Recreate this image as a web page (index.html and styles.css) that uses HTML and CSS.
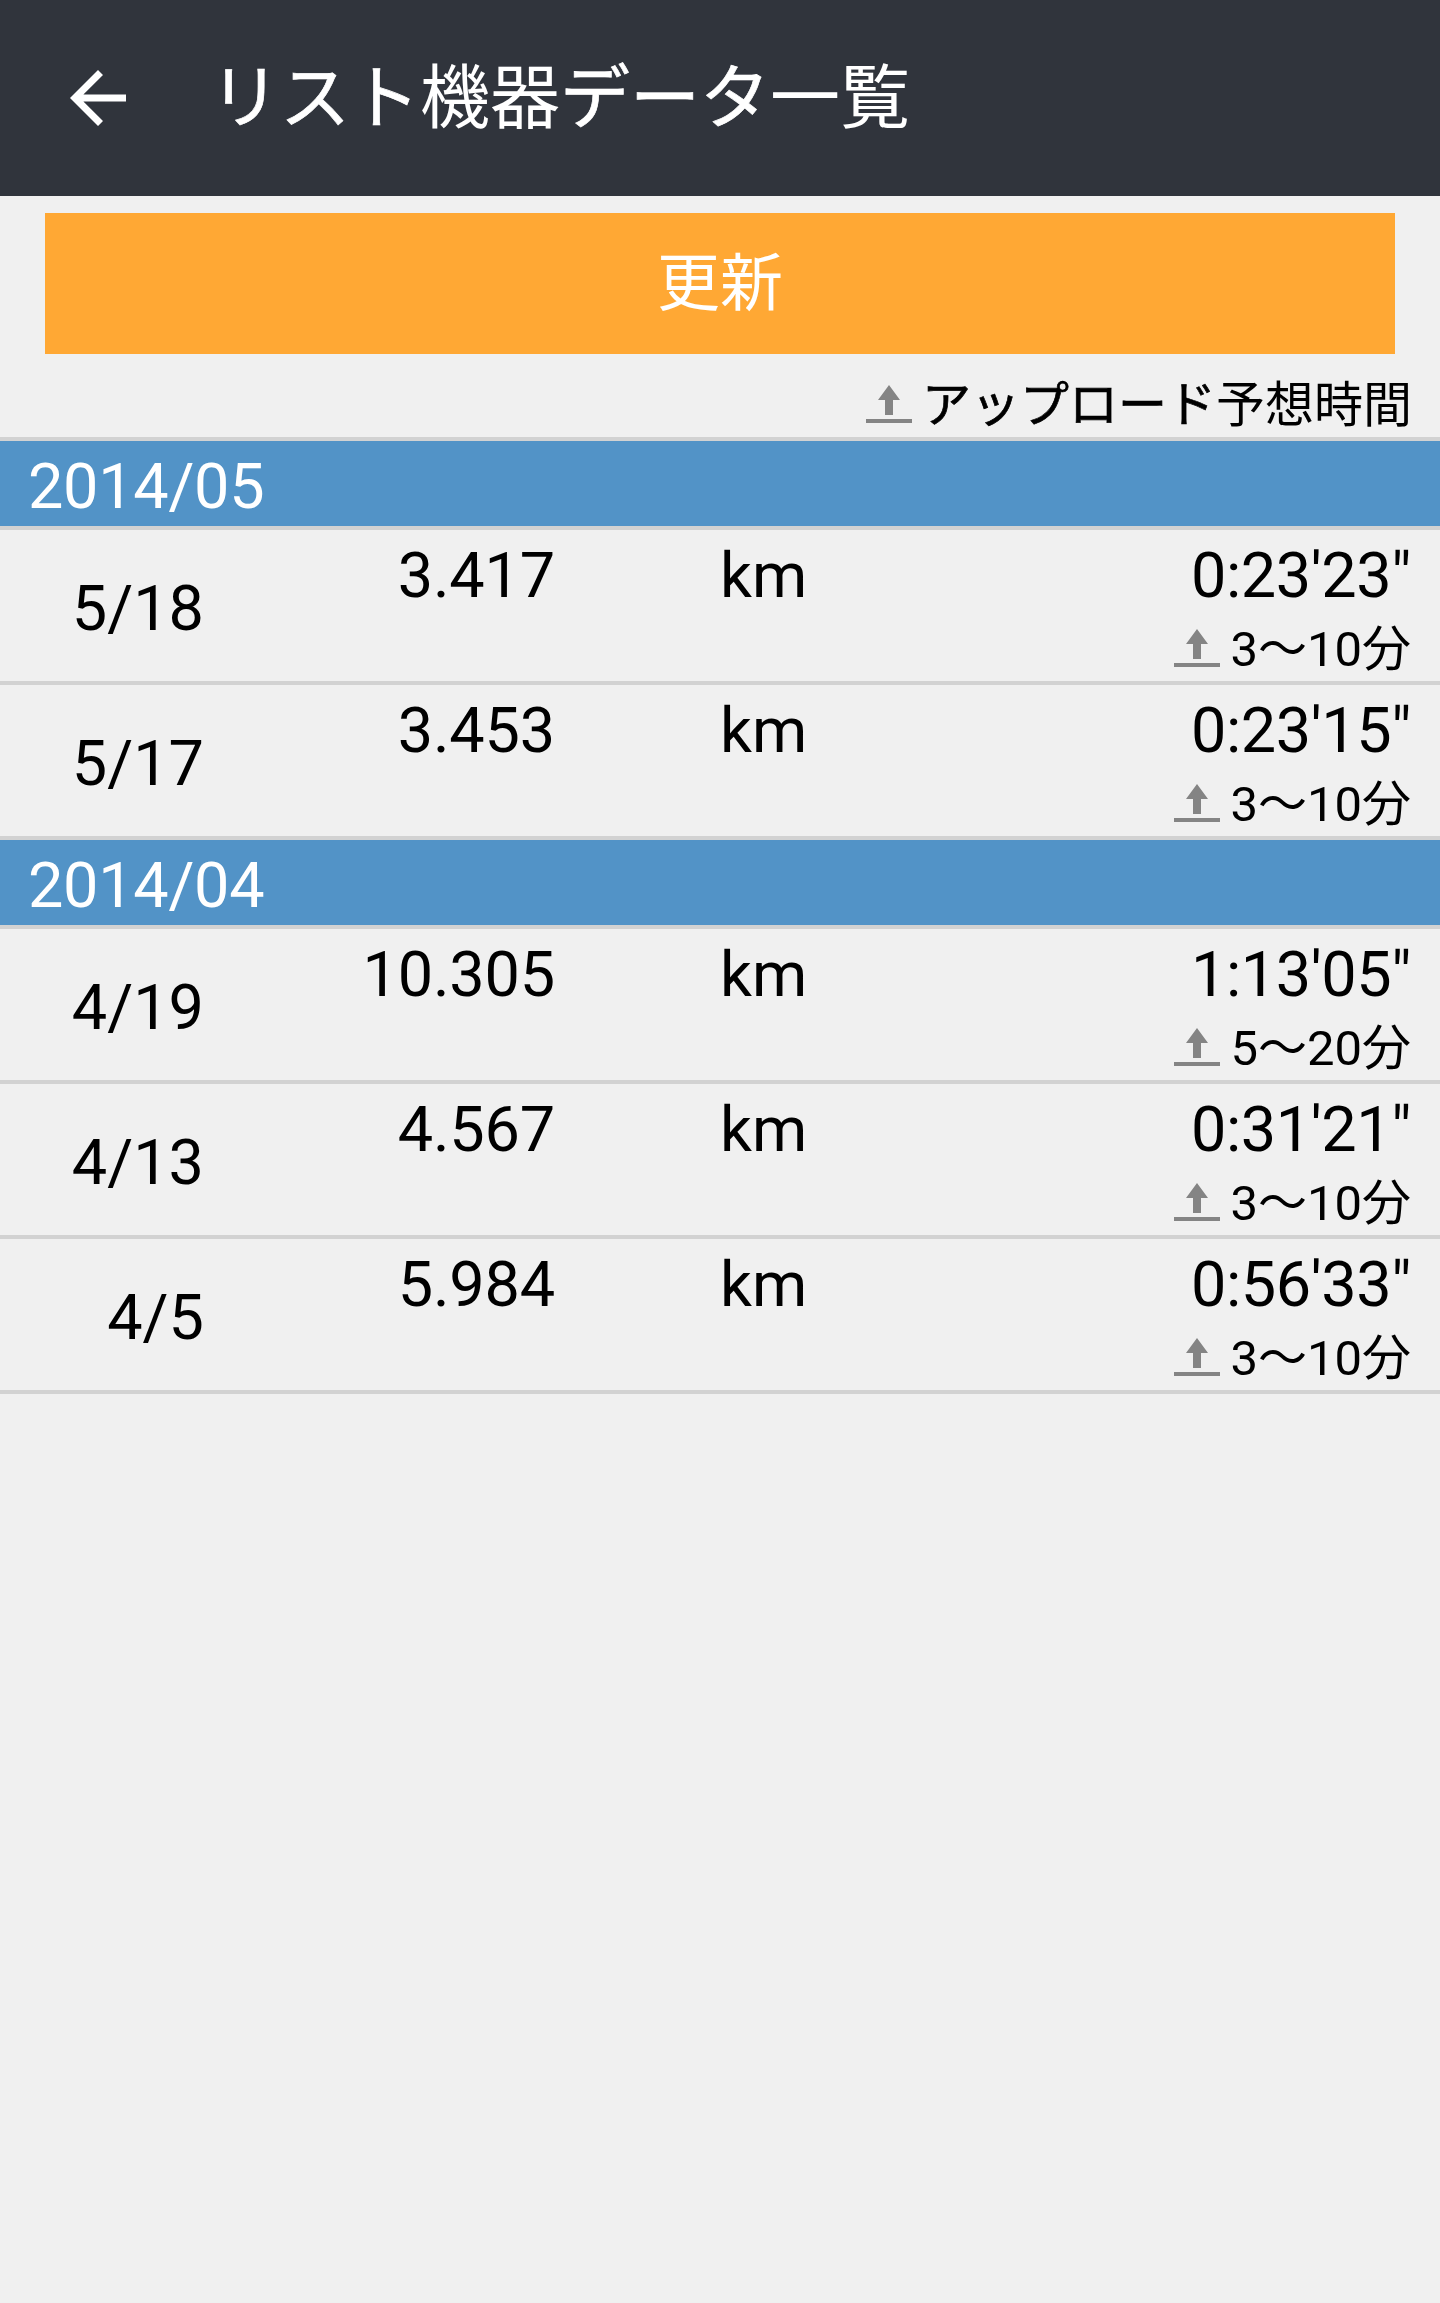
FILE: index.html
```html
<!doctype html>
<html lang="ja">
<head>
<meta charset="utf-8">
<title>リスト機器データ一覧</title>
<link rel="stylesheet" href="styles.css">
</head>
<body>
<svg class="defs">
  <symbol id="upload" viewBox="0 0 46 38">
    <path d="M23 0L34 15H27V30H19V15H12Z M0 34H46V38H0Z"/>
  </symbol>
</svg>
<div id="header">
  <svg class="back" viewBox="0 0 56 56">
    <path d="M56 24.5H13.4L33 5L28 0L0 28L28 56L33 51L13.4 31.5H56Z"/>
  </svg>
  <h1><span class="kana">リスト</span>機器<span class="kana">データ</span>一覧</h1>
</div>
<button id="update">更新</button>
<div class="legend upload">
  <svg><use href="#upload"/></svg>
  <span><span class="kana">アップロード</span>予想時間</span>
</div>
<div id="list">
  <h2>2014/05</h2>
  <div class="row">
    <div class="date">5/18</div>
    <div class="distance">3.417</div>
    <div class="unit">km</div>
    <div class="result">
      <div class="time">0:23'23"</div>
      <div class="upload"><svg><use href="#upload"/></svg><span>3～10分</span></div>
    </div>
  </div>
  <div class="row">
    <div class="date">5/17</div>
    <div class="distance">3.453</div>
    <div class="unit">km</div>
    <div class="result">
      <div class="time">0:23'15"</div>
      <div class="upload"><svg><use href="#upload"/></svg><span>3～10分</span></div>
    </div>
  </div>
  <h2>2014/04</h2>
  <div class="row">
    <div class="date">4/19</div>
    <div class="distance">10.305</div>
    <div class="unit">km</div>
    <div class="result">
      <div class="time">1:13'05"</div>
      <div class="upload"><svg><use href="#upload"/></svg><span>5～20分</span></div>
    </div>
  </div>
  <div class="row">
    <div class="date">4/13</div>
    <div class="distance">4.567</div>
    <div class="unit">km</div>
    <div class="result">
      <div class="time">0:31'21"</div>
      <div class="upload"><svg><use href="#upload"/></svg><span>3～10分</span></div>
    </div>
  </div>
  <div class="row">
    <div class="date">4/5</div>
    <div class="distance">5.984</div>
    <div class="unit">km</div>
    <div class="result">
      <div class="time">0:56'33"</div>
      <div class="upload"><svg><use href="#upload"/></svg><span>3～10分</span></div>
    </div>
  </div>
</div>
</body>
</html>
```
FILE: styles.css
```css
* {
    box-sizing: border-box;
}
body {
    margin: 0;
    min-height: 2303px;
    background: #f0f0f0;
    color: #000;
    font: 63px/74px Roboto, "Noto Sans CJK JP", sans-serif;
}
h1, h2 {
    margin: 0;
    font-weight: normal;
}
.defs {
    display: none;
}
/* katakana a bit heavier than the kanji */
.kana {
    -webkit-text-stroke: 0.7px currentColor;
}
#header {
    display: flex;
    align-items: center;
    height: 196px;
    padding-left: 70px;
    background: #30343c;
    color: #fff;
}
#header .back {
    width: 56px;
    height: 56px;
    margin-right: 84px;
    fill: #fff;
}
#header h1 {
    padding-top: 2px;
    font-size: 70px;
    line-height: 82px;
}
#update {
    display: block;
    width: 1350px;
    height: 141px;
    margin: 17px auto 0;
    padding: 0;
    border: 0;
    background: #ffa834;
    color: #fff;
    font: inherit;
}
.upload {
    display: flex;
    justify-content: flex-end;
    font-size: 49px;
    line-height: 57px;
}
.upload svg {
    width: 46px;
    height: 38px;
    margin: 8px 10px 0 0;
    fill: #848484;
}
.legend {
    height: 83px;
    padding: 23px 28px 0 0;
}
#list {
    border-top: 4px solid #d2d2d2;
}
#list h2 {
    height: 89px;
    padding: 9px 0 0 28px;
    border-bottom: 4px solid #d2d2d2;
    background: #5293c7;
    background-clip: padding-box;
    color: #fff;
    font-size: 63px;
    letter-spacing: -0.3px;
}
.row {
    display: grid;
    grid-template-columns: 204px 352px 164px 1fr;
    height: 155px;
    padding: 9px 29px 0 0;
    border-bottom: 4px solid #d2d2d2;
    text-align: right;
}
.row .date {
    padding-top: 33px;
}
.row .unit {
    grid-column: 4;
    grid-row: 1;
    text-align: left;
}
.row .result {
    grid-column: 4;
    grid-row: 1;
}
.row .distance {
    padding-right: 1px;
    letter-spacing: -0.2px;
}
.row .time {
    letter-spacing: -0.45px;
}
.row .upload {
    margin-top: 8px;
}
```
